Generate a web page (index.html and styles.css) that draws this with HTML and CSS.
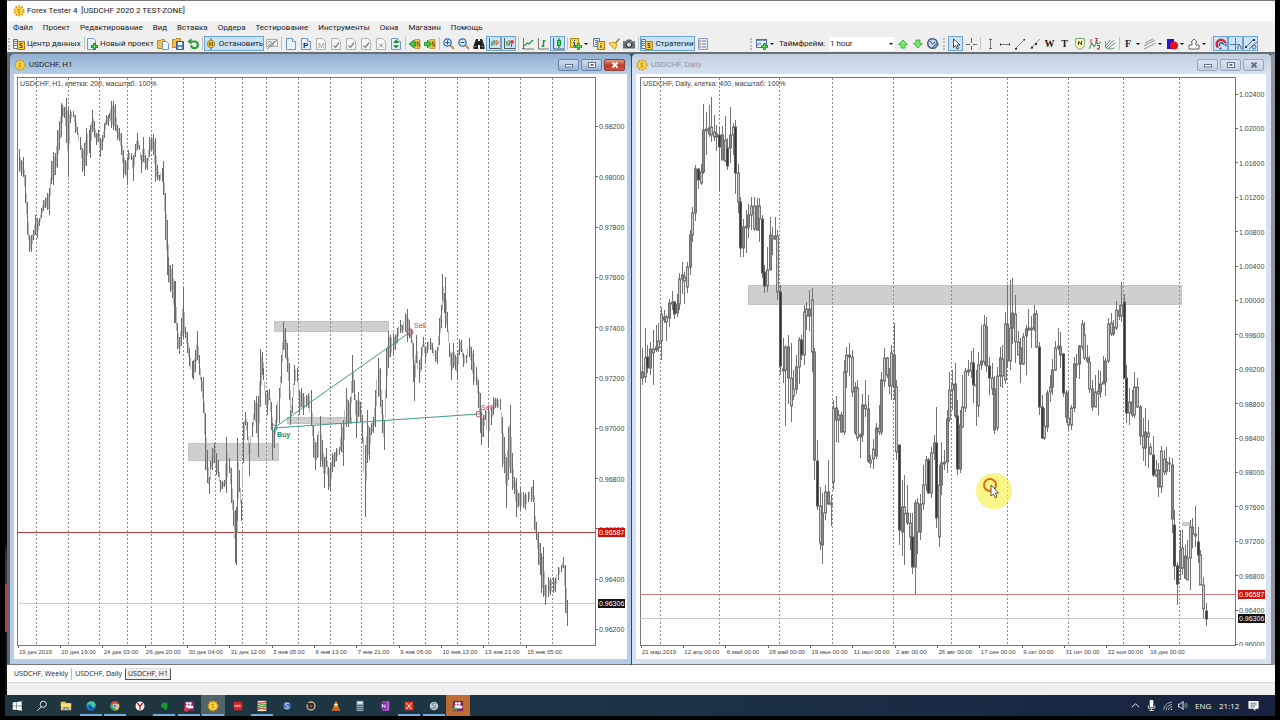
FILE: index.html
```
<!DOCTYPE html>
<html lang="ru">
<head>
<meta charset="utf-8">
<title>Forex Tester 4 [USDCHF 2020 2 TEST-ZONE]</title>
<link rel="stylesheet" href="styles.css">
</head>
<body>
<svg class="sprite" aria-hidden="true">
  <symbol id="coin" viewBox="0 0 12 12"><circle cx="6" cy="6" r="4.600" fill="#f6c92e" stroke="#d79b12" stroke-width="1.800" stroke-dasharray="1.800 1.100"/><circle cx="6" cy="6" r="3.800" fill="#f9d64a"/><path d="M7.400 4.400C5 3.200 3.800 5 5.800 6s1 2.800-1.400 1.600" fill="none" stroke="#c9961c" stroke-width="1.100"/></symbol>
  <symbol id="data" viewBox="0 0 12 12"><path d="M.5 1.500h4v9h-4z" fill="#eef3fb" stroke="#5b79a8"/><path d="M1 3.500h3M1 5.500h3M1 7.500h3" stroke="#5b79a8"/><path d="M4.500 3.500h7v8h-7z" fill="#f6cf45" stroke="#a9770a"/><path d="M9.500 5.500H7v2h2v2H6.500" fill="none" stroke="#5a3c00"/></symbol>
  <symbol id="newdoc" viewBox="0 0 12 12"><path d="M1.500.5h6l2 2v9h-8z" fill="#eaf2fc" stroke="#7f9dc4"/><path d="M8.500 5v7M5 8.500h7" stroke="#14922b" stroke-width="3"/><path d="M8.500 6v5M6 8.500h5" stroke="#58d65a"/></symbol>
  <symbol id="open" viewBox="0 0 12 12"><path d="M.5 2.500h3l1-1h3v9h-7z" fill="#f2bf4b" stroke="#c18b23"/><path d="M5.500 3.500h4l2 2v6h-6z" fill="#f4f8ff" stroke="#7893b8"/></symbol>
  <symbol id="save" viewBox="0 0 12 12"><path d="M.5 1.500h3l1-1h4v9h-8z" fill="#f2bf4b" stroke="#c18b23"/><path d="M4.500 3.500h7v8h-7z" fill="#5f8fc8" stroke="#33598b"/><path d="M6 4h4v3H6zM6.500 9h3v2h-3z" fill="#fff"/></symbol>
  <symbol id="refresh" viewBox="0 0 12 12"><path d="M2 3.500h5.500a3.500 3.300 0 1 1-3.500 4" fill="none" stroke="#2a9e35" stroke-width="2.200"/><path d="M.5 3.500 4.500 0v7z" fill="#2a9e35"/></symbol>
  <symbol id="pause" viewBox="0 0 12 12"><path d="M6 0v12" stroke="#3d5a7c"/><circle cx="6" cy="6" r="3.800" fill="#edc64c" stroke="#b78618"/><path d="M4.800 4v4M7.200 4v4" stroke="#4b3b10"/></symbol>
  <symbol id="nochart" viewBox="0 0 12 12"><path d="M.5 1.500h11v7H.5z" fill="#efefef" stroke="#aaa"/><path d="M2 5l2-2 2 3 3-3M2 7h6M1 11l10-9" fill="none" stroke="#888"/></symbol>
  <symbol id="doc" viewBox="0 0 12 12"><path d="M1.500.5h6l3 3v8h-9z" fill="#e9f3fd" stroke="#6f96c4"/><path d="M7.500.5v3h3" fill="#fff" stroke="#6f96c4"/></symbol>
  <symbol id="gdoc" viewBox="0 0 12 12"><path d="M1.500.5h6l3 3v8h-9z" fill="#f6f6f6" stroke="#b0b0b0"/></symbol>
  <symbol id="vdoc" viewBox="0 0 12 12"><use href="#gdoc"/><path d="M3.500 7.500 5.500 9.500 9 4.500" fill="none" stroke="#888" stroke-width="1.400"/></symbol>
  <symbol id="xdoc" viewBox="0 0 12 12"><use href="#gdoc"/><path d="M4 5.500l4 4M8 5.500l-4 4" stroke="#888"/></symbol>
  <symbol id="sdoc" viewBox="0 0 12 12"><use href="#doc"/><path d="M6 1.800 9 5H3zM6 10.500 3 7.300h6z" fill="#139122"/></symbol>
  <symbol id="back" viewBox="0 0 12 12"><path d="M6 1.500h5v9H6z" fill="#edc648" stroke="#a9770a" stroke-width=".6"/><path d="M0 6l5-4v2.500h2v3H5V10z" fill="#43c83c" stroke="#167b18" stroke-width=".7"/><path d="M10.500 4H8.500v2h2v2H8" fill="none" stroke="#624400" stroke-width=".8"/></symbol>
  <symbol id="fwd" viewBox="0 0 12 12"><path d="M6 1.500h5v9H6z" fill="#edc648" stroke="#a9770a" stroke-width=".6"/><path d="M7.500 6 3.500 2v2.500H0v3h3.500V10z" fill="#43c83c" stroke="#167b18" stroke-width=".7"/><path d="M10.500 4H8.500v2h2v2H8" fill="none" stroke="#624400" stroke-width=".8"/></symbol>
  <symbol id="zin" viewBox="0 0 12 12"><path d="M7 7l4 4" stroke="#c89245" stroke-width="2"/><circle cx="4.500" cy="4.500" r="3.700" fill="#d8ebfb" stroke="#2e69ae" stroke-width="1.200"/><path d="M4.500 2.500v4M2.500 4.500h4" stroke="#1f4f91"/></symbol>
  <symbol id="zout" viewBox="0 0 12 12"><path d="M7 7l4 4" stroke="#c89245" stroke-width="2"/><circle cx="4.500" cy="4.500" r="3.700" fill="#d8ebfb" stroke="#2e69ae" stroke-width="1.200"/><path d="M2.500 4.500h4" stroke="#1f4f91"/></symbol>
  <symbol id="bino" viewBox="0 0 12 12"><path d="M3 1h2v2h2V1h2l2.500 7v3H7V7H5v4H.5V8z" fill="#222"/><path d="M1.500 8.500h2M8.500 8.500h2" stroke="#888"/></symbol>
  <symbol id="shift" viewBox="0 0 12 12"><path d="M4 3v5M6 2v5M3 6h1M6 4h1" fill="none" stroke="#2a8a3a"/><path d="M1.500 0v10.500H12" fill="none" stroke="#555"/><path d="M8 2l3 2.500L8 7z" fill="#f4b183" stroke="#b1521b" stroke-width=".7"/></symbol>
  <symbol id="scrl" viewBox="0 0 12 12"><path d="M4 3v5M6 2v6M8.500 6v3M3 5h1M6 6h1" stroke="#2a8a3a"/><path d="M1.500 0v10.500H12" fill="none" stroke="#555"/><circle cx="9" cy="4" r="2" fill="#e23c34"/></symbol>
  <symbol id="line" viewBox="0 0 12 12"><path d="M1.500 0v11H12M0 10.500h3" fill="none" stroke="#777"/><path d="M2 8l3-3 2 1 4-4" fill="none" stroke="#1c9a34" stroke-width="1.200"/></symbol>
  <symbol id="bars" viewBox="0 0 12 12"><path d="M1.500 0v11H12" fill="none" stroke="#777"/><path d="M6.500 2v7M4.500 8h2M6.500 3h2" fill="none" stroke="#1c9a34" stroke-width="1.400"/></symbol>
  <symbol id="candle" viewBox="0 0 12 12"><path d="M1.500 0v11H12" fill="none" stroke="#555"/><path d="M7 0v10" stroke="#156c23"/><path d="M5.500 2.500h3v5h-3z" fill="#3de14f" stroke="#158b27"/></symbol>
  <symbol id="addind" viewBox="0 0 12 12"><path d="M.5.5h8v9h-8z" fill="#f6d659" stroke="#b38a16"/><path d="M4.500 2v1M3 4.500h1.500V8M3 8h3" fill="none" stroke="#274c88"/><path d="M8.500 5v7M5 8.500h7" stroke="#14922b" stroke-width="2.600"/><path d="M8.500 6v5M6 8.500h5" stroke="#58d65a"/></symbol>
  <symbol id="list" viewBox="0 0 12 12"><path d="M.5.5h6v8h-6z" fill="#edf3fb" stroke="#5b79a8"/><path d="M2 2.500h3M2 4.500h2M2 6.500h2" stroke="#5b79a8"/><path d="M4.500 3.500h7v8h-7z" fill="#f6d659" stroke="#a9770a"/><path d="M8 5v1M8 7v3" stroke="#274c88" stroke-width="1.200"/></symbol>
  <symbol id="broom" viewBox="0 0 12 12"><path d="M11.500.5 7 6" stroke="#a9762d" stroke-width="1.500"/><path d="M1 5l5-1 3 3-2 4.500L4 9z" fill="#f6d659" stroke="#b98b1b" stroke-width=".7"/></symbol>
  <symbol id="photo" viewBox="0 0 12 12"><path d="M1 3h2l1-1.500h4L9 3h3v7.500H0V3z" fill="#6a6a6a"/><circle cx="6" cy="6.700" r="2.700" fill="#c4dcf5" stroke="#222"/><path d="M0 4h12" stroke="#aaa" stroke-width=".6"/></symbol>
  <symbol id="note" viewBox="0 0 12 12"><path d="M1.500.5h9v11h-9z" fill="#e4eaf3" stroke="#8a9ab3"/><path d="M5 3h4M5 6h4M5 9h4" stroke="#7186aa"/><path d="M3 2v2M3 5v2M3 8v2" stroke="#ba5662"/></symbol>
  <symbol id="addchart" viewBox="0 0 12 12"><path d="M.5 1.500h10v8H.5z" fill="#fff" stroke="#4c6fa5"/><path d="M0 2h11" stroke="#4c6fa5" stroke-width="1.500"/><path d="M2 5v3M4 4v3" stroke="#3976c4"/><path d="M8.500 5v7M5 8.500h7" stroke="#14922b" stroke-width="2.600"/><path d="M8.500 6v5M6 8.500h5" stroke="#58d65a"/></symbol>
  <symbol id="up" viewBox="0 0 12 12"><path d="M6 2l4.500 4.500H8V10H4V6.500H1.500z" fill="#7be86a" stroke="#2fa832" stroke-width=".8"/></symbol>
  <symbol id="down" viewBox="0 0 12 12"><path d="M6 10l4.500-4.500H8V2H4v3.500H1.500z" fill="#7be86a" stroke="#2fa832" stroke-width=".8"/></symbol>
  <symbol id="clock" viewBox="0 0 12 12"><circle cx="5.500" cy="5.500" r="4.800" fill="#c6dcf3" stroke="#3d5677" stroke-width="1.400"/><path d="M3 3l2.500 3L8 4" fill="none" stroke="#445"/><path d="M5 10l6-6M7 11l5-5" stroke="#69798c" stroke-width="1.200"/></symbol>
  <symbol id="arrow" viewBox="0 0 12 12"><path d="M3.500 1v8.500l2-2 1.500 3.500 1.500-.7L7 7h3z" fill="#fff" stroke="#333" stroke-width=".9"/></symbol>
  <symbol id="cross" viewBox="0 0 12 12"><path d="M6.500 0v5M6.500 8v4M1 6.500h4M8 6.500h4" stroke="#666"/></symbol>
  <symbol id="vline" viewBox="0 0 12 12"><path d="M6.500 2v8" stroke="#777"/><path d="M5.500 1.500h2M5.500 10.500h2" stroke="#222"/></symbol>
  <symbol id="hline" viewBox="0 0 12 12"><path d="M2 6.500h8" stroke="#777"/><path d="M1.500 5.500v2M10.500 5.500v2" stroke="#222"/></symbol>
  <symbol id="trend" viewBox="0 0 12 12"><path d="M2 10l8-8" stroke="#888"/><path d="M1 10h2v1.500H1zM9.500 1H11v1.500H9.500z" fill="#222"/></symbol>
  <symbol id="ray" viewBox="0 0 12 12"><path d="M1 11 11 1" stroke="#999"/><path d="M2 8.500h2v2H2zM6 5h2v2H6z" fill="#333"/></symbol>
  <symbol id="pitch" viewBox="0 0 12 12"><path d="M1.500.5h9v6c0 3-3 4-4.500 5-1.500-1-4.500-2-4.500-5z" fill="#fbf6b1" stroke="#7da489"/><path d="M4.500 7V3.500l3 3V3" fill="none" stroke="#333"/></symbol>
  <symbol id="waves" viewBox="0 0 12 12"><path d="M0 11l3-6 2 4 3-5 1 2 3-2" fill="none" stroke="#2e8c45"/><path d="M2 1v4M6 .5h2.500L7 2.500h1.500L6 4.500M8 7.500h2.500v2L8 11h3" fill="none" stroke="#c63131"/></symbol>
  <symbol id="fan" viewBox="0 0 12 12"><path d="M1.500 3v5c0 4 5 3 9 2M1 9 6 2M2 10l8-8M3 11l8-6" stroke="#6ba075" fill="none"/></symbol>
  <symbol id="chan" viewBox="0 0 12 12"><path d="M0 8l11-6M0 11l12-6M1 5l8-4" stroke="#777" stroke-width=".8"/></symbol>
  <symbol id="shapes" viewBox="0 0 12 12"><path d="M1 1h7v10H1z" fill="#1e18d8"/><circle cx="8" cy="7.500" r="4" fill="#e3131c"/></symbol>
  <symbol id="stamp" viewBox="0 0 12 12"><path d="M6 1l3 3H8v3h3v4H1V7h3V4H3z" fill="#fff" stroke="#555" stroke-width=".9"/></symbol>
  <symbol id="magnet" viewBox="0 0 12 12"><path d="M3 9.500C-.5 5 4 0 8.500 2.500L11 5" fill="none" stroke="#cc2e35" stroke-width="2.400"/><path d="M5 8c-1.500-2 .5-4 2.500-3L9 6.500M4.500 11l2-1M10 8l1.500-2" fill="none" stroke="#2f59ae" stroke-width="1.400"/></symbol>
  <symbol id="snap" viewBox="0 0 12 12"><path d="M5.500 0v12M0 6.500h10" stroke="#5c7796"/><path d="M8 9c0-2 3-2 3 0M8 9v2M11 9v2" fill="none" stroke="#355a8c"/></symbol>
  <symbol id="link" viewBox="0 0 12 12"><path d="M1 9l8-8M4 11l8-7" stroke="#556b83"/><path d="M0 8h2v2H0zM8 1h2v2H8z" fill="#333"/><circle cx="9" cy="9" r="2" fill="none" stroke="#4a76b0"/></symbol>
  <symbol id="win" viewBox="0 0 14 14"><path d="M2 3l4.500-.7v4.400H2zM7 2.200l5.500-.8v5.300H7zM2 7.200h4.500v4.400L2 11zM7 7.200h5.500v5.300L7 11.700z" fill="#fff"/></symbol>
  <symbol id="find" viewBox="0 0 14 14"><circle cx="8.500" cy="5" r="3.600" fill="none" stroke="#fff"/><path d="M6 8l-4.500 4.500" stroke="#fff"/></symbol>
  <symbol id="folder" viewBox="0 0 14 14"><path d="M1 2h5l1 1.500h6V12H1z" fill="#f4c95a"/><path d="M1 5h12v2H1z" fill="#fbe49b"/><path d="M4 12V8.500h6V12H8.500v-2h-3v2z" fill="#3e97d8"/></symbol>
  <symbol id="edge" viewBox="0 0 14 14"><circle cx="7" cy="7" r="5.500" fill="#1b7fd0"/><path d="M2 6c1-6 10-6 10.500 0 0 2-3 2.500-5 1.500 1-2-1-4-5.500-1.500z" fill="#48cf92"/><path d="M5 6.500c-1 3 2 6 6 4-2-.3-4-1.500-3.500-3.300z" fill="#0b4f9c"/></symbol>
  <symbol id="chrome" viewBox="0 0 14 14"><circle cx="7" cy="7" r="5.200" fill="#eec33a"/><path d="M7 7 2.200 4.600A5.200 5.200 0 0 1 12 5H7z" fill="#dc4639"/><path d="M7 7 2.200 4.600A5.200 5.200 0 0 0 7 12.200l2-4z" fill="#37a353"/><circle cx="7" cy="7" r="2.400" fill="#4688ee" stroke="#fff" stroke-width=".8"/></symbol>
  <symbol id="yandex" viewBox="0 0 14 14"><circle cx="7" cy="7" r="5.200" fill="#f6f6f6"/><path d="M4 3.500l3 4 3-4M7 7v4.500" fill="none" stroke="#cf2532" stroke-width="1.700"/></symbol>
  <symbol id="ever" viewBox="0 0 14 14"><path d="M4 5l2-2h3c2 0 2.500 2 2 4.500-.5 3.500-1.500 4-3 3.800-1-.3-.5-2-1-2.300-2 1-3.500 0-3.500-3.500z" fill="#109c35"/></symbol>
  <symbol id="cam" viewBox="0 0 14 14"><path d="M1 1h12v12H1z" fill="#7c2562"/><circle cx="5" cy="4" r="1.600" fill="#fff"/><circle cx="8.500" cy="4" r="1.600" fill="#fff"/><path d="M3 6h7v1.500l2-1.500v4l-2-1v1H3z" fill="#fff"/></symbol>
  <symbol id="camrec" viewBox="0 0 14 14"><use href="#cam"/><circle cx="4" cy="11" r="2.600" fill="#e33945"/></symbol>
  <symbol id="camon" viewBox="0 0 14 14"><use href="#cam"/><path d="M1 9h5v3H1z" fill="#2db544"/></symbol>
  <symbol id="redapp" viewBox="0 0 14 14"><path d="M2 2h10v10H2z" fill="#d61f26"/><path d="M3.500 8V6h1v2M6 8V6h1v2M8.500 8V6h1v2" fill="none" stroke="#fff" stroke-width=".8"/></symbol>
  <symbol id="stripes" viewBox="0 0 14 14"><path d="M2 1h10v12H2z" fill="#f7f3cf"/><path d="M2 4c4-2 6 1 10-2M2 11c4-2 6 0 10-1" fill="none" stroke="#d13a2f" stroke-width="1.500"/><path d="M2 7c4-3 6 0 10-2M2 9c4-2 6 0 10-2" fill="none" stroke="#2b8a32" stroke-width="1.200"/></symbol>
  <symbol id="ball" viewBox="0 0 14 14"><circle cx="7" cy="7" r="4.600" fill="#3e66ad"/><path d="M9.500 4.500C5 2 4 6 7 7s2 4-3 2" fill="none" stroke="#b8cbe8" stroke-width="1.400"/></symbol>
  <symbol id="lens" viewBox="0 0 14 14"><circle cx="7" cy="7" r="5.400" fill="#c5b3a5"/><circle cx="7" cy="7" r="3.800" fill="#342a2a"/><circle cx="7" cy="7" r="1.600" fill="#8a5a3c"/><path d="M2 4l4 1" stroke="#222" stroke-width="1.500"/></symbol>
  <symbol id="cone" viewBox="0 0 14 14"><path d="M6.300 1.500h1.400L10.500 10h-7z" fill="#f17a18"/><path d="M5.500 4.500h3l.7 2H4.800z" fill="#fff"/><path d="M3 10h8l1 2.500H2z" fill="#e96c0e"/></symbol>
  <symbol id="calc" viewBox="0 0 14 14"><path d="M3 1h8v12H3z" fill="#93a6b5"/><path d="M4 2h6v2.500H4z" fill="#d9ecf6"/><path d="M4 6.500h6M4 8.700h6M4 11h6" stroke="#344a5c" stroke-width="1.300" stroke-dasharray="1.300 1"/></symbol>
  <symbol id="onenote" viewBox="0 0 14 14"><path d="M4 1.500h8v11H4z" fill="#b85cd3"/><path d="M2 3h7v8H2z" fill="#7824a3"/><path d="M4 9V5l3 4V5" fill="none" stroke="#fff"/></symbol>
  <symbol id="xapp" viewBox="0 0 14 14"><path d="M2 2h10v10H2z" fill="#e7331f"/><path d="M4 3.500l6 7M10 3.500l-6 7" stroke="#fff" stroke-width="1.100"/></symbol>
  <symbol id="globe" viewBox="0 0 14 14"><circle cx="7" cy="7" r="5" fill="#b9c7cf"/><path d="M9.500 4.500C5 2 4 6 7 7s2 4-3 2" fill="none" stroke="#7e929d" stroke-width="1.400"/></symbol>
  <symbol id="chev" viewBox="0 0 12 12"><path d="M2 8l4-4 4 4" fill="none" stroke="#fff"/></symbol>
  <symbol id="mic" viewBox="0 0 12 12"><rect x="4" y="0" width="4" height="8" rx="1" fill="#fff"/><path d="M2.500 6v3h7V6M6 9v2M3.500 11.500h5" fill="none" stroke="#ddd"/></symbol>
  <symbol id="wifi" viewBox="0 0 12 12"><path d="M2 11C2 6 6 2.500 11 2.500M4.500 11c0-3 3-6 6.500-6M7 11c0-2 2-3.500 4-3.500" fill="none" stroke="#aeb7c4"/><path d="M9 11l2-2v2z" fill="#fff"/></symbol>
  <symbol id="sound" viewBox="0 0 12 12"><path d="M.5 4.500h2l3-3v9l-3-3h-2z" fill="none" stroke="#fff"/><path d="M7 4c1 1 1 3 0 4M8.800 3c1.500 2 1.500 4 0 6" fill="none" stroke="#9aa"/></symbol>
  <symbol id="msg" viewBox="0 0 12 12"><path d="M.5 1h11v8.500H8V12L5.500 9.500h-5z" fill="#fff"/><path d="M2.500 3.500h7M2.500 5.500h7M2.500 7.500h5" stroke="#1a2740" stroke-width=".7"/></symbol>
</svg>

<div class="screen">
  <div class="app">
    <header class="titlebar"><svg class="ico"><use href="#coin"/></svg><h1>Forex Tester 4&nbsp; [USDCHF 2020 2 TEST-ZONE]</h1></header>
    <nav class="menu" aria-label="Главное меню">
      <button>Файл</button><button>Проект</button><button>Редактирование</button><button>Вид</button><button>Вставка</button><button>Ордера</button><button>Тестирование</button><button>Инструменты</button><button>Окна</button><button>Магазин</button><button>Помощь</button>
    </nav>
    <div class="toolbars">
      <div class="bar main" role="toolbar" aria-label="Тестирование">
        <i class="grip"></i>
        <button class="wide"><svg class="ico"><use href="#data"/></svg>Центр данных</button><i class="sep"></i>
        <button class="wide"><svg class="ico"><use href="#newdoc"/></svg>Новый проект</button>
        <button aria-label="Открыть"><svg class="ico"><use href="#open"/></svg></button>
        <button aria-label="Сохранить"><svg class="ico"><use href="#save"/></svg></button>
        <button aria-label="Обновить"><svg class="ico"><use href="#refresh"/></svg></button><i class="sep"></i>
        <button class="label stop on"><svg class="ico"><use href="#pause"/></svg>Остановить</button>
        <button aria-label="Без графика"><svg class="ico"><use href="#nochart"/></svg></button><i class="sep"></i>
        <button aria-label="Новый ордер"><svg class="ico"><use href="#doc"/></svg></button>
        <button aria-label="Отложенный ордер"><svg class="ico" viewBox="0 0 12 12"><use href="#doc"/><text x="3" y="10" class="glyph">P</text></svg></button>
        <button aria-label="Изменить ордер"><svg class="ico" viewBox="0 0 12 12"><use href="#gdoc"/><text x="3" y="10" class="glyph dim">M</text></svg></button>
        <button aria-label="Закрыть ордер"><svg class="ico"><use href="#vdoc"/></svg></button>
        <button aria-label="Закрыть часть"><svg class="ico"><use href="#vdoc"/></svg></button>
        <button aria-label="Закрыть все"><svg class="ico"><use href="#vdoc"/></svg></button>
        <button aria-label="Удалить ордер"><svg class="ico"><use href="#xdoc"/></svg></button>
        <button aria-label="Список ордеров"><svg class="ico"><use href="#sdoc"/></svg></button><i class="sep"></i>
        <button aria-label="Предыдущая сделка"><svg class="ico"><use href="#back"/></svg></button>
        <button aria-label="Следующая сделка"><svg class="ico"><use href="#fwd"/></svg></button><i class="sep"></i>
        <button aria-label="Увеличить"><svg class="ico"><use href="#zin"/></svg></button>
        <button aria-label="Уменьшить"><svg class="ico"><use href="#zout"/></svg></button>
        <button aria-label="Найти"><svg class="ico"><use href="#bino"/></svg></button>
        <button class="on" aria-label="Сдвиг графика"><svg class="ico"><use href="#shift"/></svg></button>
        <button class="on" aria-label="Автопрокрутка"><svg class="ico"><use href="#scrl"/></svg></button><i class="sep"></i>
        <button aria-label="Линия"><svg class="ico"><use href="#line"/></svg></button>
        <button aria-label="Бары"><svg class="ico"><use href="#bars"/></svg></button>
        <button class="on" aria-label="Свечи"><svg class="ico"><use href="#candle"/></svg></button><i class="sep"></i>
        <button class="drop" aria-label="Добавить индикатор"><svg class="ico"><use href="#addind"/></svg></button>
        <button aria-label="Список индикаторов"><svg class="ico"><use href="#list"/></svg></button>
        <button aria-label="Очистить"><svg class="ico"><use href="#broom"/></svg></button>
        <button aria-label="Снимок"><svg class="ico"><use href="#photo"/></svg></button><i class="sep"></i>
        <button class="label strat on"><svg class="ico"><use href="#data"/></svg>Стратегии</button>
        <button aria-label="Заметки"><svg class="ico"><use href="#note"/></svg></button>
      </div>
      <div class="bar" role="toolbar" aria-label="Таймфрейм">
        <i class="grip"></i>
        <button class="drop" aria-label="Новый график"><svg class="ico"><use href="#addchart"/></svg></button>
        <label for="tf">Таймфрейм:</label>
        <span class="pick"><select id="tf"><option>1 hour</option><option>4 hours</option><option>1 day</option></select></span>
        <button aria-label="Крупнее"><svg class="ico"><use href="#up"/></svg></button>
        <button aria-label="Мельче"><svg class="ico"><use href="#down"/></svg></button>
        <button aria-label="Время"><svg class="ico"><use href="#clock"/></svg></button>
      </div>
      <div class="bar draw" role="toolbar" aria-label="Рисование">
        <i class="grip"></i>
        <button class="on" aria-label="Курсор"><svg class="ico"><use href="#arrow"/></svg></button>
        <button aria-label="Перекрестие"><svg class="ico"><use href="#cross"/></svg></button><i class="sep"></i>
        <button aria-label="Вертикальная линия"><svg class="ico"><use href="#vline"/></svg></button>
        <button aria-label="Горизонтальная линия"><svg class="ico"><use href="#hline"/></svg></button>
        <button aria-label="Трендовая линия"><svg class="ico"><use href="#trend"/></svg></button>
        <button aria-label="Луч"><svg class="ico"><use href="#ray"/></svg></button>
        <button class="serif">W</button>
        <button class="serif">T</button>
        <button aria-label="Метка"><svg class="ico"><use href="#pitch"/></svg></button>
        <button aria-label="Волны"><svg class="ico"><use href="#waves"/></svg></button>
        <button aria-label="Веер"><svg class="ico"><use href="#fan"/></svg></button><i class="sep"></i>
        <button class="drop serif"><span>F</span></button>
        <button class="drop" aria-label="Каналы"><svg class="ico"><use href="#chan"/></svg></button>
        <button class="drop" aria-label="Фигуры"><svg class="ico"><use href="#shapes"/></svg></button>
        <button class="drop" aria-label="Стрелки"><svg class="ico"><use href="#stamp"/></svg></button><i class="sep"></i>
        <button class="on" aria-label="Магнит"><svg class="ico"><use href="#magnet"/></svg></button>
        <button class="on" aria-label="Привязка"><svg class="ico"><use href="#snap"/></svg></button>
        <button class="on" aria-label="Связь"><svg class="ico"><use href="#link"/></svg></button>
      </div>
    </div>
    <main class="mdi">
      <section class="win active">
        <header><svg class="ico"><use href="#coin"/></svg><h2>USDCHF, H1</h2>
          <button aria-label="Свернуть"><svg viewBox="0 0 10 8"><rect x="1.500" y="3.500" width="7" height="2.500"/></svg></button>
          <button aria-label="Развернуть"><svg viewBox="0 0 10 8"><rect x="1.500" y="1.500" width="7" height="5"/><rect x="4" y="3.500" width="2" height="1"/></svg></button>
          <button class="close" aria-label="Закрыть"><svg viewBox="0 0 10 8"><path d="M2.500 1.500l5 5M7.500 1.500l-5 5"/></svg></button>
        </header>
        <svg class="chart" id="h1" viewBox="14 74 613 585" role="img" aria-label="USDCHF, H1"></svg>
      </section>
      <section class="win">
        <header><svg class="ico"><use href="#coin"/></svg><h2>USDCHF, Daily</h2>
          <button aria-label="Свернуть"><svg viewBox="0 0 10 8"><rect x="1.500" y="3.500" width="7" height="2.500"/></svg></button>
          <button aria-label="Развернуть"><svg viewBox="0 0 10 8"><rect x="1.500" y="1.500" width="7" height="5"/><rect x="4" y="3.500" width="2" height="1"/></svg></button>
          <button aria-label="Закрыть"><svg viewBox="0 0 10 8"><path d="M2.500 1.500l5 5M7.500 1.500l-5 5" stroke-width="2"/></svg></button>
        </header>
        <svg class="chart" id="daily" viewBox="636 74 630 585" role="img" aria-label="USDCHF, Daily"></svg>
      </section>
    </main>
    <nav class="tabs" aria-label="Графики"><button>USDCHF, Weekly</button><button>USDCHF, Daily</button><button class="current" aria-current="true">USDCHF, H1</button></nav>
    <footer class="status"></footer>
  </div>
  <div class="taskbar">
    <div class="apps">
      <button aria-label="Пуск"><svg><use href="#win"/></svg></button>
      <button aria-label="Поиск"><svg><use href="#find"/></svg></button>
      <button aria-label="Проводник"><svg><use href="#folder"/></svg></button>
      <button class="run" aria-label="Edge"><svg><use href="#edge"/></svg></button>
      <button class="run" aria-label="Chrome"><svg><use href="#chrome"/></svg></button>
      <button aria-label="Yandex"><svg><use href="#yandex"/></svg></button>
      <button class="run" aria-label="Evernote"><svg><use href="#ever"/></svg></button>
      <button class="run" aria-label="Запись"><svg><use href="#camrec"/></svg></button>
      <button class="run front" aria-label="Forex Tester"><svg><use href="#coin"/></svg></button>
      <button aria-label="Терминал"><svg><use href="#redapp"/></svg></button>
      <button class="run" aria-label="Графики"><svg><use href="#stripes"/></svg></button>
      <button aria-label="Сеть"><svg><use href="#ball"/></svg></button>
      <button aria-label="Просмотр"><svg><use href="#lens"/></svg></button>
      <button aria-label="Плеер"><svg><use href="#cone"/></svg></button>
      <button aria-label="Калькулятор"><svg><use href="#calc"/></svg></button>
      <button aria-label="OneNote"><svg><use href="#onenote"/></svg></button>
      <button class="run" aria-label="Редактор"><svg><use href="#xapp"/></svg></button>
      <button class="run" aria-label="Браузер"><svg><use href="#globe"/></svg></button>
      <button class="alert" aria-label="Захват"><svg><use href="#camon"/></svg></button>
    </div>
    <div class="tray">
      <button aria-label="Скрытые значки"><svg><use href="#chev"/></svg></button>
      <button aria-label="Микрофон"><svg><use href="#mic"/></svg></button>
      <button aria-label="Сеть"><svg><use href="#wifi"/></svg></button>
      <button aria-label="Звук"><svg><use href="#sound"/></svg></button>
      <span class="lang">ENG</span><time>21:12</time>
      <button class="notes" aria-label="Уведомления"><svg><use href="#msg"/></svg></button>
    </div>
  </div>
</div>
<script src="charts.js"></script>
</body>
</html>
```

FILE: styles.css
```
* { box-sizing: border-box; }
body { margin: 0; background: #000; color: #222; font: 8px/12px Roboto, "Noto Sans", sans-serif; }
h1, h2 { margin: 0; font-size: 8px; font-weight: 400; line-height: 12px; }
button, select { margin: 0; padding: 0; border: 0; background: none; color: inherit; font: inherit; white-space: nowrap; }
.sprite { position: absolute; width: 0; height: 0; }
.glyph { font: 700 8px "Liberation Sans", sans-serif; fill: #102c80; }
.glyph.dim { font-weight: 400; fill: #999; }
.ico { width: 12px; height: 12px; flex: none; }

.screen { display: flex; flex-direction: column; min-height: 100vh; padding: 0 5px 5px; }
.app { flex: 1; display: flex; flex-direction: column; min-height: 0; padding-left: 2px; background: linear-gradient(#060606 78%, #333 80% 84%, #a84848 84% 91%, #111 91%); }

.titlebar { display: flex; align-items: center; gap: 2px; height: 21px; padding-left: 6px; border-top: 1px solid #777; background: #fdfdfd; }
.menu { display: flex; align-items: center; gap: 10px; height: 14px; padding-left: 6px; background: #efefef; }

.toolbars { display: flex; align-items: center; height: 17px; padding: 0 17px 0 1px; background: #efefef; }
.bar { display: flex; align-items: center; }
.bar.main { margin-right: auto; }
.bar.draw { margin-left: 3px; }
.bar button { display: flex; align-items: center; justify-content: center; width: 15px; height: 15px; flex: none; }
.bar .wide { width: 69px; justify-content: flex-start; gap: 2px; }
.bar .label { gap: 2px; }
.bar .stop { width: 60px; }
.bar .strat { width: 55px; }
.bar .drop { width: 22px; justify-content: flex-start; gap: 2px; padding-left: 1px; }
.drop::after { content: ""; border: 2px solid transparent; border-top-color: #111; border-bottom: 0; }
.drop span { width: 12px; }
.bar .on { background: #cbe3f6; border: 1px solid #6fa3cf; }
.bar .serif { font: 700 10px/12px "Liberation Serif", serif; }
.grip { width: 5px; height: 12px; border-left: 2px dotted #bbb; flex: none; }
.sep { width: 4px; height: 13px; flex: none; background: linear-gradient(#c2c2c2, #c2c2c2) center / 1px 100% no-repeat; }
.bar label { margin: 0 4px 0 2px; width: 46px; white-space: nowrap; }
.pick { position: relative; width: 66px; }
.pick select { width: 100%; height: 14px; padding: 0 1px; appearance: none; background: #fff; }
.pick::after { content: ""; position: absolute; right: 2px; top: 6px; border: 2px solid transparent; border-top-color: #111; border-bottom: 0; pointer-events: none; }

.mdi { flex: 1; display: grid; grid-template-columns: 621fr 639fr; gap: 1px; min-height: 0; padding: 0 4px 0 3px; border-top: 2px solid #6b6f73; background: #1d4f70; box-shadow: inset -4px 0 #94949c, inset 3px 0 #666; }
.win { display: flex; flex-direction: column; min-width: 0; min-height: 0; padding: 0 4px 5px; background: linear-gradient(#c3cfdf, #d7e1f2 20px); border-radius: 4px 4px 0 0; border-bottom: 1px solid #777; }
.win + .win { padding-right: 5px; }
.win.active { background: linear-gradient(#93b0d2, #b5cde8 20px); }
.win header { display: flex; align-items: center; gap: 2px; height: 20px; padding: 2px 2px 0 0; flex: none; }
.win h2 { flex: 1; color: #8e96a3; padding-left: 1px; }
.win.active h2 { color: #222; }
.win header button { width: 21px; height: 12px; display: grid; place-items: center; border: 1px solid #96a5ba; border-radius: 2px; background: linear-gradient(#dbe4f1, #c3d0e2); }
.win.active header button { border-color: #6583a9; background: linear-gradient(#cddcee, #9ab5d6); }
.win header button svg { width: 10px; height: 8px; fill: #fff; stroke: #66748a; }
.win.active header .close { border-color: #8b3a34; background: linear-gradient(#e39b8b, #bf3725 55%, #cc5a42); }
.win header .close svg { stroke: #fff; stroke-width: 2; }
.chart { flex: 1; min-height: 0; width: 100%; background: #fff; display: block; }

.plot { fill: #fdfdfd; stroke: #777; }
.grid { stroke: #8c8c8c; stroke-dasharray: 2 2; }
.zone { fill: #cfcfcf; stroke: #c4c4c4; stroke-width: 1; }
.bar-a { stroke: #6c6c6c; }
.bar-b { stroke: #b8b8b8; }
.wick { stroke: #737373; }
.body-up { fill: #d0d0d0; stroke: #777; stroke-width: 1; }
.body-mid { fill: #8c8c8c; stroke: #6e6e6e; stroke-width: 1; }
.body-down { fill: #333; stroke: #5a5a5a; stroke-width: 1; }
.level { stroke: #b2393c; }
.level.soft { stroke: #cc7c7e; }
.price { stroke: #c8c8c8; }
.tick { stroke: #666; }
.scale { font: 7px "Liberation Sans", sans-serif; fill: #444; }
.dates { font: 6px "Liberation Sans", sans-serif; fill: #444; }
.tag-red { fill: #d0110d; }
.tag-dark { fill: #111; }
.margin { fill: #fff; }
.scale.light { fill: #fff; }
.trade { stroke: #3f9d8c; fill: none; }
.mark { stroke: #bb5560; fill: none; }
.mark.buy { stroke: #3f9d8c; }
.side { font: 7px "Liberation Sans", sans-serif; }
.side.buy { fill: #169078; font-weight: 700; }
.side.sell { fill: #d8434e; }
.halo { fill: #f8f34b; opacity: .65; }
.ring { fill: none; stroke: #e06a12; stroke-width: 2; }
.pointer { fill: #fff; stroke: #555; stroke-width: 1; }

.tabs { display: flex; align-items: center; height: 17px; padding-left: 4px; background: #fdfdfd; flex: none; font-family: "Open Sans", "Noto Sans", sans-serif; font-size: 7px; }
.tabs button { height: 12px; padding: 0 3px; line-height: 10px; border-right: 1px solid #bbb; }
.tabs button:nth-child(2) { border-right: 0; }
.tabs .current { border: 1px solid #555; border-top-color: #ddd; background: #f0f0f0; padding: 0 2px; }
.status { height: 13px; background: #efefef; border-top: 1px solid #d8d8d8; flex: none; }

.taskbar { display: flex; justify-content: space-between; height: 21px; flex: none; background: linear-gradient(90deg, #20363f, #1c3446 45%, #17233f); color: #fff; }
.apps { display: flex; justify-content: space-between; width: 465px; }
.apps button { width: 24px; height: 21px; display: grid; place-items: center; }
.apps svg { width: 12px; height: 12px; }
.apps .run { border-bottom: 2px solid #76acd6; padding-top: 2px; }
.apps .run, .apps .run + .run { border-image: linear-gradient(90deg, transparent 3px, #76acd6 3px 21px, transparent 21px) 2; }
.apps .front { background: #4f6569; }
.apps .alert { background: #bd6c34; }
.tray { display: flex; align-items: center; padding-right: 14px; font-family: "Open Sans", "Noto Sans", sans-serif; }
.tray button { width: 16px; display: grid; place-items: center; }
.tray svg { width: 11px; height: 11px; }
.lang { margin-left: 4px; width: 24px; }
.tray time { width: 26px; }
```

FILE: charts.js
```
const NS = 'http://www.w3.org/2000/svg';

function add(svg, name, attrs, text) {
  const el = document.createElementNS(NS, name);
  for (const key in attrs) el.setAttribute(key, attrs[key]);
  if (text !== undefined) el.textContent = text;
  svg.appendChild(el);
}
const seg = (svg, cls, x1, y1, x2, y2) => add(svg, 'line', { class: cls, x1, y1, x2, y2 });
const box = (svg, cls, x, y, width, height) => add(svg, 'rect', { class: cls, x, y, width, height });
const crisp = v => Math.floor(v) + 0.5;

function frame(svg, o) {
  box(svg, 'plot', o.left + 0.5, 77.5, o.right - o.left, 568);
  o.zones.forEach(z => box(svg, 'zone', z[0] + 0.5, z[1] + 0.5, z[2] - z[0], z[3] - z[1]));
  o.grid.forEach(x => seg(svg, 'grid', crisp(x), 78, crisp(x), 645));
  seg(svg, o.level[2], o.left, crisp(o.level[0]), o.right, crisp(o.level[0]));
  seg(svg, 'price', o.left, crisp(o.last[0]), o.right, crisp(o.last[0]));
}

function axes(svg, o) {
  add(svg, 'text', { class: 'scale', x: o.left + 3, y: 86 }, o.title);
  for (let i = 0; i < o.steps; i++) {
    const y = o.top + i * o.step;
    seg(svg, 'tick', o.right, crisp(y), o.right + 3, crisp(y));
    add(svg, 'text', { class: 'scale', x: o.right + 4, y: y + 3 }, (o.first - i * o.unit).toFixed(5));
  }
  box(svg, 'margin', o.right + 3, 646, 28, 13);
  [['tag-red', o.level], ['tag-dark', o.last]].forEach(([cls, p]) => {
    box(svg, cls, o.right + 3, p[0] - 4, 27, 9);
    add(svg, 'text', { class: 'scale light', x: o.right + 4, y: p[0] + 3 }, p[1]);
  });
  o.dates.forEach((d, i) => {
    const x = o.left + 1 + i * 42.35;
    seg(svg, 'tick', crisp(x), 646, crisp(x), 648);
    add(svg, 'text', { class: 'dates', x: x + 1, y: 654 }, d);
  });
}

/* H1: x, high, low */
const hourly = [
[19,149,172],[21,160,176],[23,157,177],[25,175,203],[27,202,235],[29,235,252],[31,235,252],[33,230,240],[35,215,235],[37,218,238],
[39,218,226],[41,208,218],[43,200,211],[45,198,208],[47,193,210],[49,188,215],[51,161,184],[53,152,185],[55,153,175],[57,130,168],
[59,121,150],[61,103,137],[62,105,117],[64,107,118],[66,98,143],[68,106,177],[70,110,123],[73,111,117],[75,115,133],[77,127,135],
[80,137,150],[82,148,172],[84,143,176],[86,128,166],[89,130,153],[90,125,158],[92,110,132],[94,121,137],[96,133,145],[98,130,142],
[100,138,157],[102,135,150],[104,123,138],[106,115,125],[108,115,126],[109,113,118],[111,101,128],[113,101,130],[115,104,131],[117,125,140],
[119,128,141],[121,133,155],[123,150,178],[125,160,175],[127,157,185],[128,150,160],[131,153,160],[133,155,181],[135,144,157],[137,133,150],
[139,145,150],[141,155,173],[143,137,162],[145,155,170],[147,158,170],[149,137,157],[151,137,150],[153,134,155],[155,138,182],[157,165,180],
[159,175,181],[162,168,182],[163,161,195],[165,193,240],[167,220,275],[168,257,282],[170,265,292],[172,264,298],[174,281,323],[175,281,323],
[177,323,349],[179,337,354],[181,318,346],[183,287,338],[185,327,338],[187,332,353],[189,348,366],[192,361,378],[193,360,380],[195,350,372],
[197,331,360],[199,355,375],[201,377,391],[203,377,413],[205,413,470],[207,450,483],[209,477,494],[210,461,470],[212,448,470],[214,443,463],
[216,453,475],[218,460,477],[220,480,492],[222,481,489],[224,480,487],[226,437,493],[229,458,473],[231,468,503],[233,500,526],[235,510,563],
[236,507,565],[237,438,521],[239,470,492],[241,500,521],[243,422,463],[245,412,425],[247,422,440],[249,443,476],[252,422,437],[254,400,420],
[256,396,433],[258,396,457],[260,349,407],[262,352,375],[263,368,380],[265,391,405],[267,390,415],[269,389,400],[271,402,430],[272,423,460],
[274,427,448],[276,405,428],[279,388,423],[281,355,383],[283,322,350],[285,328,358],[287,343,372],[289,363,400],[290,410,425],[292,397,413],
[294,365,385],[297,368,382],[299,390,415],[301,388,407],[303,393,415],[306,395,407],[308,393,408],[311,390,425],[313,425,457],[315,442,470],
[317,435,458],[320,416,467],[322,440,467],[324,457,488],[326,448,467],[328,467,490],[330,463,492],[332,453,472],[334,452,467],[336,448,461],
[339,447,455],[341,423,452],[343,420,466],[346,388,427],[348,400,427],[350,397,423],[352,355,393],[354,380,400],[356,400,438],[358,392,417],
[360,402,422],[362,415,443],[365,445,517],[367,410,463],[369,427,460],[371,423,435],[373,417,433],[375,390,427],[378,358,397],[380,368,407],
[382,400,433],[384,420,450],[386,348,398],[388,331,368],[390,335,357],[393,333,355],[395,335,350],[397,328,343],[400,320,333],[402,325,333],
[405,313,332],[407,309,342],[409,320,338],[411,330,343],[413,343,382],[414,365,401],[416,335,363],[419,360,383],[421,347,370],[423,337,347],
[425,348,363],[427,342,353],[430,338,350],[432,343,353],[435,350,362],[437,347,364],[439,318,345],[441,305,328],[442,274,300],[444,293,313],
[445,277,328],[447,312,332],[449,343,357],[451,353,380],[453,343,368],[455,355,370],[457,353,380],[459,339,355],[461,340,352],[463,353,367],
[466,355,363],[469,338,357],[471,347,370],[473,350,385],[476,367,385],[478,380,408],[480,393,433],[481,413,445],[483,415,437],[485,410,420],
[488,405,447],[491,407,425],[493,397,415],[495,398,408],[497,398,408],[500,399,410],[502,417,467],[504,437,473],[506,457,508],[508,427,480],
[510,405,473],[512,453,490],[514,477,494],[516,478,517],[518,493,507],[520,487,510],[523,492,508],[525,493,510],[528,492,502],[531,487,502],
[533,480,502],[534,503,530],[536,522,540],[538,533,565],[540,543,575],[541,553,593],[543,547,597],[545,585,605],[548,577,597],[550,578,595],
[553,577,593],[555,578,592],[558,567,580],[561,565,572],[563,557,568],[565,565,613],[567,600,626]];

/* Daily: x, high, low, body top, body bottom, 1 for a strong falling day */
const days = [
[642,348,385,372,378],[645,328,383,358,377],[647,345,373,357,368,1],[650,342,375,349,368],[653,330,385,349,353],[656,325,352,347,350],[658,323,352,341,348],
[661,307,360,314,341],[664,310,323,317,320],[666,315,341,317,322],[669,299,327,303,318],[672,291,310,302,304],[674,301,319,302,314,1],[677,294,317,304,313],
[679,273,310,279,304],[682,262,294,275,279],[684,272,304,277,281],[687,262,293,267,287],[690,230,275,235,267],[692,207,242,213,235],[695,165,221,169,213],
[698,168,189,169,180,1],[701,164,185,172,183],[703,104,174,130,172],[706,112,155,129,131],[709,105,137,128,134],[711,97,142,127,135],[714,115,141,132,137],
[716,125,151,134,137],[719,127,192,135,147,1],[722,126,160,135,160],[725,116,162,140,161],[727,138,170,148,166,1],[730,107,163,135,148],[733,123,155,127,135],
[735,120,194,127,173,1],[738,164,213,173,202],[740,197,257,202,248,1],[743,219,257,227,248],[746,210,253,226,228],[748,204,238,215,227],[751,197,230,206,215],
[754,197,231,206,229],[757,198,231,206,230],[759,198,242,206,219],[762,215,278,219,273,1],[764,265,293,272,286,1],[767,247,292,270,286],[770,217,270,235,270],
[772,227,255,236,239],[775,217,240,236,239],[777,230,300,236,292],[780,285,375,292,366,1],[783,338,383,369,371],[785,345,426,347,370],[788,335,404,347,378],
[791,343,422,378,406],[793,370,400,389,396],[796,355,394,367,389],[799,337,384,340,367],[801,335,360,340,355,1],[804,305,365,312,355],[806,302,330,309,316],
[809,290,331,309,316],[812,288,372,300,352],[814,348,480,352,460],[817,440,510,461,506,1],[820,487,550,506,543],[822,493,564,513,545],[825,485,520,492,513],
[828,460,505,492,504],[831,495,526,503,505],[833,400,490,408,482],[836,396,442,408,420],[838,410,443,415,420],[841,412,433,415,432],[844,360,435,372,432],
[846,347,388,355,372],[849,343,376,355,357],[852,350,397,357,392],[855,382,435,387,433],[857,380,441,388,438],[860,433,458,435,437],[862,394,442,405,435],
[865,380,417,405,409],[868,395,463,409,461],[870,455,468,460,463],[873,439,469,449,459],[876,423,459,428,456],[879,405,435,428,432],[881,372,435,380,432],
[884,348,387,358,381],[887,357,378,358,375],[889,368,394,374,386],[891,345,400,353,386],[894,323,400,355,387],[896,380,460,387,452],[899,445,545,445,530,1],
[902,480,556,507,532],[904,475,565,507,514],[907,485,525,513,523],[910,513,550,523,537],[912,513,574,537,567,1],[915,500,594,503,567],[917,498,554,503,532],
[920,494,540,504,532],[923,465,510,485,504],[926,456,491,460,485],[928,458,494,460,493,1],[931,447,498,453,493],[934,435,460,443,453],[936,407,528,443,518,1],
[939,465,547,485,537],[941,442,495,463,485],[944,450,470,462,464],[947,410,473,419,462],[949,372,422,390,419],[952,370,410,384,390],[955,363,418,384,416],
[957,400,475,416,469,1],[960,410,473,425,469],[962,375,428,407,427],[965,368,412,371,408],[968,360,376,370,372],[971,351,378,363,371],[973,348,403,363,385,1],
[976,370,426,385,386],[978,352,417,365,406],[981,325,370,361,365],[984,315,365,325,362],[986,317,372,327,366],[989,357,395,366,378,1],[992,363,395,378,389],
[994,376,434,389,430],[997,367,431,376,428],[1000,347,387,358,376],[1002,345,388,359,376],[1005,312,384,324,380],[1007,285,368,324,361],[1010,280,370,328,361],
[1012,278,344,313,328],[1015,295,363,314,342],[1018,331,355,342,355],[1020,338,383,348,364],[1023,333,365,337,364],[1026,325,375,329,336],[1028,309,331,328,330],
[1031,316,348,328,330],[1034,305,331,314,329],[1036,310,348,314,347],[1039,342,415,347,407,1],[1042,395,439,407,438,1],[1044,408,440,426,438],[1047,390,432,393,427],
[1050,375,402,387,392],[1052,359,395,370,387],[1055,341,371,348,370],[1058,328,350,346,348],[1060,332,368,347,355],[1063,353,397,354,393,1],[1066,390,423,393,417],
[1068,390,430,418,425],[1071,405,430,408,425],[1074,357,412,364,408],[1076,354,378,364,365],[1079,345,379,346,364],[1082,320,350,324,347],[1084,322,360,335,358],
[1087,345,363,358,361],[1089,356,393,362,389],[1092,380,411,389,407],[1095,375,407,392,407],[1098,370,415,391,394],[1100,371,398,384,392],[1103,356,383,382,384],
[1105,358,396,361,382],[1108,318,363,324,361],[1111,313,336,323,334],[1113,320,336,327,334],[1116,301,330,310,328],[1119,305,320,311,316],[1121,282,322,305,316],
[1124,294,378,302,378,1],[1126,365,423,378,413,1],[1129,388,425,402,413],[1132,390,417,402,415],[1134,372,418,387,415],[1137,378,408,387,407],[1140,405,445,407,436],
[1143,418,461,436,448],[1145,408,466,432,448],[1148,420,468,433,437],[1150,443,455,447,454],[1153,436,477,455,475,1],[1156,460,477,470,476],[1158,463,497,470,487],
[1161,446,493,451,487],[1164,450,475,459,472],[1166,447,475,462,471],[1169,457,472,463,464],[1172,458,533,465,519],[1174,510,580,525,566,1],[1177,562,605,566,584,1],
[1180,530,580,550,568],[1182,530,575,548,568],[1185,545,579,556,578],[1187,540,580,558,580],[1190,520,590,527,558],[1192,518,548,527,534],[1195,506,547,534,536],
[1198,527,563,542,555,1],[1200,550,585,555,585],[1203,577,618,585,609],[1206,603,626,611,619,1]];

const h1 = document.getElementById('h1');
const left = {
  left: 17, right: 595, title: 'USDCHF, H1, клетка: 200, масштаб: 100%',
  grid: [36, 68, 99, 127, 151, 183, 215, 242, 266, 298, 330, 361, 393, 425, 457, 488, 520, 552],
  zones: [[274, 321, 388, 331], [188, 443, 278, 460], [287, 417, 351, 423]],
  level: [532, '0.96587', 'level'], last: [603, '0.96306'],
  first: 0.982, unit: 0.002, top: 126.4, step: 50.3, steps: 11,
  dates: ['19 дек 2019', '20 дек 19:00', '24 дек 03:00', '26 дек 20:00', '30 дек 04:00', '31 дек 12:00', '3 янв 05:00', '6 янв 13:00', '7 янв 21:00', '9 янв 05:00', '10 янв 13:00', '13 янв 21:00', '15 янв 05:00']
};
frame(h1, left);
hourly.forEach(([x, hi, lo], i) => {
  const next = hourly[i + 1];
  if (next) {
    const a = (hi + next[1]) / 2, b = (lo + next[2]) / 2, trim = (b - a) * 0.15;
    seg(h1, 'bar-b', x + 1.5, a + trim, x + 1.5, b - trim);
  }
  seg(h1, 'bar-a', x + 0.5, hi, x + 0.5, lo);
});
seg(h1, 'trade', 274, 428, 410, 332);
seg(h1, 'trade', 274, 428, 479, 414);
add(h1, 'circle', { class: 'mark buy', cx: 274, cy: 428, r: 3 });
add(h1, 'circle', { class: 'mark', cx: 410, cy: 332, r: 3 });
add(h1, 'circle', { class: 'mark', cx: 479, cy: 414, r: 3 });
add(h1, 'text', { class: 'side buy', x: 277, y: 437 }, 'Buy');
add(h1, 'text', { class: 'side sell', x: 414, y: 328 }, 'Sell');
add(h1, 'text', { class: 'side sell', x: 481, y: 410 }, 'Sell');
axes(h1, left);

const daily = document.getElementById('daily');
const right = {
  left: 640, right: 1235, title: 'USDCHF, Daily, клетка: 400, масштаб: 100%',
  grid: [660, 719, 779, 832, 893, 951, 1007, 1068, 1123, 1179],
  zones: [[748, 285, 1181, 304], [1182, 522, 1189, 525], [1176, 565, 1187, 568]],
  level: [594, '0.96587', 'level soft'], last: [618, '0.96306'],
  first: 1.024, unit: 0.004, top: 94, step: 34.4, steps: 17,
  dates: ['21 мар 2019', '12 апр 00:00', '6 май 00:00', '28 май 00:00', '19 июн 00:00', '11 июл 00:00', '2 авг 00:00', '26 авг 00:00', '17 сен 00:00', '9 окт 00:00', '31 окт 00:00', '22 ноя 00:00', '16 дек 00:00']
};
frame(daily, right);
days.forEach(([x, hi, lo, top, bottom, strong], i) => {
  seg(daily, 'wick', x + 0.5, hi, x + 0.5, lo);
  const cls = strong ? 'body-down' : (i * 7) % 5 < 2 ? 'body-mid' : 'body-up';
  box(daily, cls, x - 0.5, top, 2, Math.max(1, bottom - top));
});
add(daily, 'circle', { class: 'halo', cx: 994, cy: 491, r: 18 });
add(daily, 'circle', { class: 'ring', cx: 990, cy: 485, r: 6 });
add(daily, 'path', { class: 'pointer', d: 'M991 485v11l2.500-2 2 4 1.500-1-1.500-4h3z' });
axes(daily, right);
```
